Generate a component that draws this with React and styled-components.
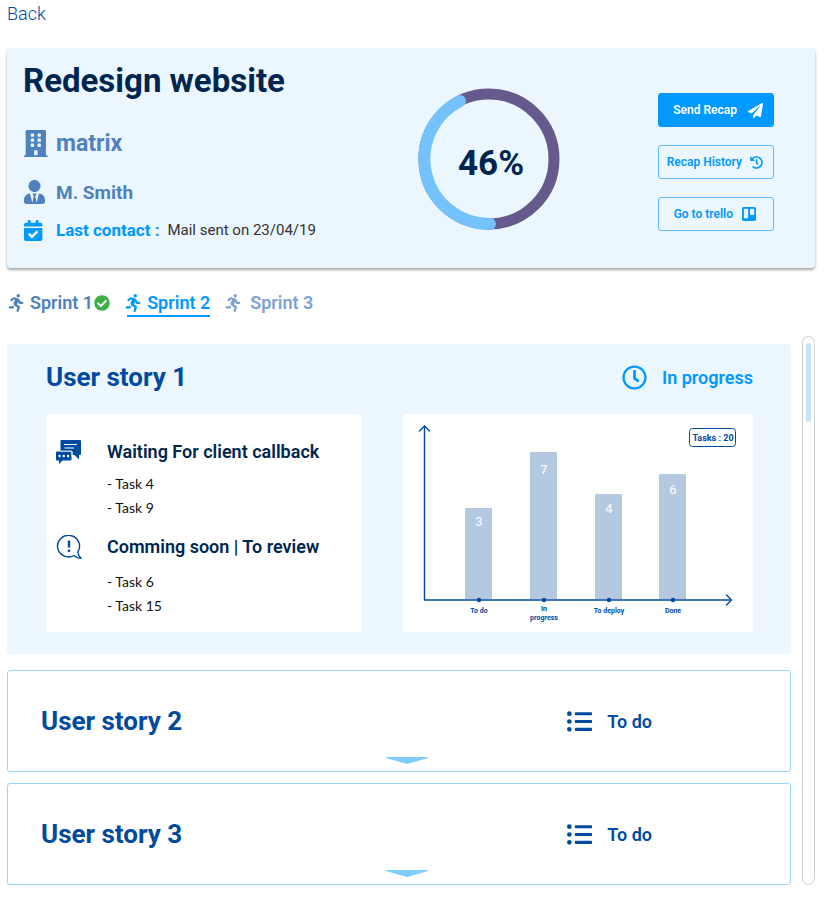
import React from "react";
import styled, { createGlobalStyle } from "styled-components";
import {
  FaBuilding,
  FaUserTie,
  FaCalendarCheck,
  FaRunning,
  FaCheckCircle,
  FaPaperPlane,
  FaHistory,
  FaTrello,
  FaRegClock,
  FaListUl,
} from "react-icons/fa";

const color = {
  navy: "#00264f",
  blue: "#004a9f",
  steel: "#4f81bd",
  accent: "#0099ff",
  pale: "#ebf6ff",
  sky: "#74c2fb",
  line: "#9ad6fb",
  bar: "#b4c9e0",
  purple: "#665a8c",
};

const GlobalStyle = createGlobalStyle`
  *, *::before, *::after { box-sizing: border-box; }
  body {
    margin: 0;
    background: #fff;
    color: ${color.navy};
    font-family: Roboto, "Liberation Sans", sans-serif;
  }
  h1, h2, h3, p, ul { margin: 0; padding: 0; }
  button { font: inherit; cursor: pointer; }
  svg { display: block; flex: none; }
`;

const Page = styled.main`
  padding: 0 15px 15px 7px;
`;

const BackLink = styled.a`
  display: inline-block;
  line-height: 28px;
  font-size: 18px;
  font-weight: 300;
  color: ${color.blue};
  text-decoration: none;
`;

const ProjectCard = styled.header`
  display: grid;
  grid-template-columns: minmax(0, 1fr) 142px 116px;
  column-gap: 98px;
  align-items: start;
  margin-top: 20px;
  padding: 12px 41px 22px 16px;
  min-height: 220px;
  background: ${color.pale};
  border-radius: 4px;
  box-shadow: 0 2px 3px rgba(0, 0, 0, 0.35);
`;

const ProjectTitle = styled.h1`
  font-size: 33px;
  line-height: 42px;
  font-weight: 700;
`;

const InfoRow = styled.div`
  display: grid;
  grid-template-columns: 32px auto 1fr;
  align-items: center;
  height: ${(p) => p.$height}px;
  margin-top: ${(p) => p.$space}px;
  padding-left: 1px;
  color: ${(p) => p.$color};
  font-size: ${(p) => p.$size}px;
  font-weight: 700;
  white-space: nowrap;
`;

const ContactNote = styled.span`
  margin-left: 8px;
  font-size: 15px;
  font-weight: 400;
  color: #333;
`;

const Ring = styled.svg`
  margin-top: 28px;
`;

const RingLabel = styled.text`
  font-size: 35px;
  font-weight: 700;
  fill: ${color.navy};
`;

const Actions = styled.div`
  display: grid;
  gap: 18px;
  margin-top: 33px;
`;

const ActionButton = styled.button`
  display: flex;
  align-items: center;
  justify-content: flex-end;
  gap: ${(p) => p.$gap}px;
  height: 34px;
  padding: 0 ${(p) => p.$end}px 0 0;
  border: 1px solid ${(p) => (p.$primary ? color.accent : "#5dbdfc")};
  border-radius: 3px;
  background: ${(p) => (p.$primary ? color.accent : "transparent")};
  color: ${(p) => (p.$primary ? "#fff" : color.accent)};
  font-size: 12px;
  font-weight: 600;
  white-space: nowrap;
`;

const SprintTabs = styled.nav`
  display: flex;
  gap: 14px;
  margin-top: 20px;
`;

const SprintTab = styled.button`
  display: flex;
  align-items: center;
  height: 29px;
  padding: 0;
  border: 0;
  background: none;
  color: ${(p) => p.$color};
  font-size: 18px;
  font-weight: 600;
`;

const SprintName = styled.span`
  margin: 0 ${(p) => p.$after || 0}px 0 ${(p) => p.$space}px;
`;

const ActiveMark = styled.span`
  display: flex;
  align-items: center;
  height: 29px;
  background: linear-gradient(${color.accent}, ${color.accent}) right bottom / calc(100% - 3px) 2px no-repeat;
`;

const Board = styled.section`
  display: flex;
  align-items: stretch;
  gap: 11px;
  margin-top: 19px;
`;

const Stories = styled.div`
  flex: 1;
  min-width: 0;
  padding-top: 8px;
`;

const ScrollTrack = styled.div`
  width: 13px;
  padding: 6px 3px;
  border: 1px solid #d0d0d0;
  border-radius: 7px;
`;

const ScrollThumb = styled.div`
  height: 79px;
  border-radius: 3px;
  background: #c4e5fc;
`;

const OpenStory = styled.article`
  padding: 14px 38px 22px 39px;
  border-radius: 4px;
  background: ${color.pale};
`;

const StoryHead = styled.div`
  display: flex;
  align-items: center;
  justify-content: space-between;
  height: 38px;
`;

const StoryTitle = styled.h2`
  font-size: 26px;
  line-height: 38px;
  font-weight: 700;
  color: ${color.blue};
`;

const Status = styled.div`
  display: flex;
  align-items: center;
  gap: 15px;
  font-size: 18px;
  font-weight: 600;
  color: ${(p) => p.$color};
`;

const Panels = styled.div`
  display: grid;
  grid-template-columns: 316fr 350fr;
  gap: 41px;
  margin-top: 18px;
`;

const Panel = styled.div`
  border-radius: 4px;
  background: #fff;
`;

const TaskPanel = styled(Panel)`
  padding: 26px 10px 14px;
`;

const TaskGroup = styled.section`
  display: grid;
  grid-template-columns: 51px 1fr;
  & + & { margin-top: 15px; }
`;

const TaskHeading = styled.h3`
  font-size: 18px;
  line-height: 24px;
  font-weight: 600;
`;

const TaskList = styled.ul`
  margin-top: ${(p) => p.$space}px;
  list-style: none;
  font-family: Lato, sans-serif;
  font-size: 14px;
  line-height: 24px;
  color: #111;
`;

const ChartSvg = styled.svg`
  width: 100%;
  height: auto;
`;

const ChartText = styled.text`
  font-size: ${(p) => p.$size}px;
  font-weight: ${(p) => p.$weight};
  fill: ${(p) => p.$fill};
  text-anchor: middle;
`;

const ClosedStory = styled.article`
  margin-top: ${(p) => p.$space}px;
  padding: 31px 138px 7px 33px;
  border: 1px solid ${color.line};
  border-radius: 3px;
`;

const ExpandRow = styled.div`
  display: flex;
  justify-content: center;
  margin: 17px -120px 0 0;
`;

const ExpandButton = styled.button`
  padding: 0;
  border: 0;
  background: none;
`;

const ChatIcon = () => (
  <svg width="25" height="24" viewBox="0 0 25 24" fill={color.blue} aria-hidden="true">
    <path d="M5.5 0H24a1 1 0 0 1 1 1v13a1 1 0 0 1-1 1h-1v4.500L18.500 15H16.500v-3a1 1 0 0 0-1-1H4.500V1a1 1 0 0 1 1-1z" />
    <path d="M1 11.500h13.500a1 1 0 0 1 1 1v7a1 1 0 0 1-1 1H6.500L3 24v-3.500H1a1 1 0 0 1-1-1v-7a1 1 0 0 1 1-1z" />
    <path d="M8 4.500h13M8.500 8H18" stroke="#fff" strokeWidth="1.2" />
    <path d="M4 11h11a1 1 0 0 1 1 1v4" stroke="#fff" strokeWidth=".8" fill="none" />
    <g fill="#fff">
      <circle cx="3.5" cy="16" r="1.2" />
      <circle cx="7.8" cy="16" r="1.2" />
      <circle cx="12.1" cy="16" r="1.2" />
    </g>
  </svg>
);

const ReviewIcon = () => (
  <svg width="26" height="26" viewBox="0 0 26 26" fill="none" stroke={color.blue} strokeWidth="1.4" strokeLinejoin="round" aria-hidden="true">
    <path d="M18 20.500A11 10.800 0 1 1 22 16.600C21.600 19 23.400 21.800 25.200 23.400 22.200 23.600 20 22.400 18 20.500z" />
    <path d="M13 5.500v7" strokeWidth="2.4" />
    <circle cx="13" cy="15.8" r="1.4" fill={color.blue} stroke="none" />
  </svg>
);

const columns = [
  { label: ["To do"], count: 3, x: 76, top: 94, text: 112 },
  { label: ["In", "progress"], count: 7, x: 141, top: 38, text: 60 },
  { label: ["To deploy"], count: 4, x: 206, top: 80, text: 99 },
  { label: ["Done"], count: 6, x: 270, top: 60, text: 80 },
];

const TaskChart = () => (
  <ChartSvg viewBox="0 0 350 218" role="img" aria-label="Tasks per status">
    {columns.map((c) => (
      <g key={c.label[0]}>
        <path d={`M${c.x - 14} 185V${c.top + 1}q0-1 1-1h25q1 0 1 1V185z`} fill={color.bar} />
        <ChartText x={c.x} y={c.text} $size={13} $weight={500} $fill="#f1f7fd">
          {c.count}
        </ChartText>
      </g>
    ))}
    <g fill="none" stroke={color.blue} strokeWidth="1.4" strokeLinecap="round" strokeLinejoin="round">
      <path d="M21.500 12V186H328" />
      <path d="M16.500 17l5-5 5 5M323.500 181l5 5-5 5" />
    </g>
    {columns.map((c) => (
      <g key={c.label[0]}>
        <circle cx={c.x} cy="186" r="2.2" fill={color.blue} />
        {c.label.map((line, i) => (
          <ChartText
            key={line}
            x={c.x}
            y={c.label.length > 1 ? 197 + i * 9 : 199}
            $size={7}
            $weight={700}
            $fill={color.blue}
          >
            {line}
          </ChartText>
        ))}
      </g>
    ))}
    <rect x="286.5" y="14.5" width="46" height="18" rx="3" fill="none" stroke={color.blue} />
    <ChartText x="310" y="27" $size={9} $weight={700} $fill={color.blue}>
      Tasks : 20
    </ChartText>
  </ChartSvg>
);

const PendingStory = ({ title, space }) => (
  <ClosedStory $space={space}>
    <StoryHead>
      <StoryTitle>{title}</StoryTitle>
      <Status $color={color.blue}>
        <FaListUl size={25} aria-hidden="true" />
        To do
      </Status>
    </StoryHead>
    <ExpandRow>
      <ExpandButton type="button" aria-label={`Expand ${title}`}>
        <svg width="42" height="7" viewBox="0 0 42 7" fill="#80ccff" aria-hidden="true">
          <path d="M0 0h42v1L21 7 0 1z" />
        </svg>
      </ExpandButton>
    </ExpandRow>
  </ClosedStory>
);

export default function App() {
  return (
    <>
      <GlobalStyle />
      <Page>
        <BackLink href="#">Back</BackLink>
        <ProjectCard>
          <div>
            <ProjectTitle>Redesign website</ProjectTitle>
            <InfoRow $height={38} $space={22} $size={23} $color={color.steel}>
              <FaBuilding size={27} preserveAspectRatio="xMinYMin" aria-hidden="true" />
              matrix
            </InfoRow>
            <InfoRow $height={28} $space={16} $size={19} $color={color.steel}>
              <FaUserTie size={24} preserveAspectRatio="xMinYMin" aria-hidden="true" />
              M. Smith
            </InfoRow>
            <InfoRow $height={24} $space={12} $size={17} $color={color.accent}>
              <FaCalendarCheck size={21} preserveAspectRatio="xMinYMin" aria-hidden="true" />
              Last contact :
              <ContactNote>Mail sent on 23/04/19</ContactNote>
            </InfoRow>
          </div>
          <Ring width="142" height="142" viewBox="0 0 142 142" role="img" aria-label="46% complete">
            <g fill="none" strokeWidth="11">
              <circle cx="71" cy="71" r="65" stroke={color.purple} />
              <path d="M72 136A65 65 0 0 1 42 13" stroke={color.sky} strokeWidth="12" strokeLinecap="round" />
            </g>
            <RingLabel x="73" y="87" textAnchor="middle">46%</RingLabel>
          </Ring>
          <Actions>
            <ActionButton type="button" $primary $gap={11} $end={10}>
              Send Recap
              <FaPaperPlane size={15} aria-hidden="true" />
            </ActionButton>
            <ActionButton type="button" $gap={8} $end={10}>
              Recap History
              <FaHistory size={13} aria-hidden="true" />
            </ActionButton>
            <ActionButton type="button" $gap={8} $end={16}>
              Go to trello
              <FaTrello size={16} aria-hidden="true" />
            </ActionButton>
          </Actions>
        </ProjectCard>

        <SprintTabs aria-label="Sprints">
          <SprintTab type="button" $color={color.steel}>
            <FaRunning size={18} aria-hidden="true" />
            <SprintName $space={5} $after={1}>Sprint 1</SprintName>
            <FaCheckCircle size={16} color="#3fae49" aria-label="Completed" />
          </SprintTab>
          <SprintTab type="button" $color={color.accent} aria-current="true">
            <ActiveMark>
              <FaRunning size={18} aria-hidden="true" />
              <SprintName $space={5}>Sprint 2</SprintName>
            </ActiveMark>
          </SprintTab>
          <SprintTab type="button" $color="#7da2d0">
            <FaRunning size={18} aria-hidden="true" />
            <SprintName $space={8}>Sprint 3</SprintName>
          </SprintTab>
        </SprintTabs>

        <Board>
          <Stories>
            <OpenStory>
              <StoryHead>
                <StoryTitle>User story 1</StoryTitle>
                <Status $color={color.accent}>
                  <FaRegClock size={25} aria-hidden="true" />
                  In progress
                </Status>
              </StoryHead>
              <Panels>
                <TaskPanel>
                  <TaskGroup>
                    <ChatIcon />
                    <div>
                      <TaskHeading>Waiting For client callback</TaskHeading>
                      <TaskList $space={8}>
                        <li>- Task 4</li>
                        <li>- Task 9</li>
                      </TaskList>
                    </div>
                  </TaskGroup>
                  <TaskGroup>
                    <ReviewIcon />
                    <div>
                      <TaskHeading>Comming soon | To review</TaskHeading>
                      <TaskList $space={11}>
                        <li>- Task 6</li>
                        <li>- Task 15</li>
                      </TaskList>
                    </div>
                  </TaskGroup>
                </TaskPanel>
                <Panel>
                  <TaskChart />
                </Panel>
              </Panels>
            </OpenStory>
            <PendingStory title="User story 2" space={16} />
            <PendingStory title="User story 3" space={11} />
          </Stories>
          <ScrollTrack>
            <ScrollThumb />
          </ScrollTrack>
        </Board>
      </Page>
    </>
  );
}
